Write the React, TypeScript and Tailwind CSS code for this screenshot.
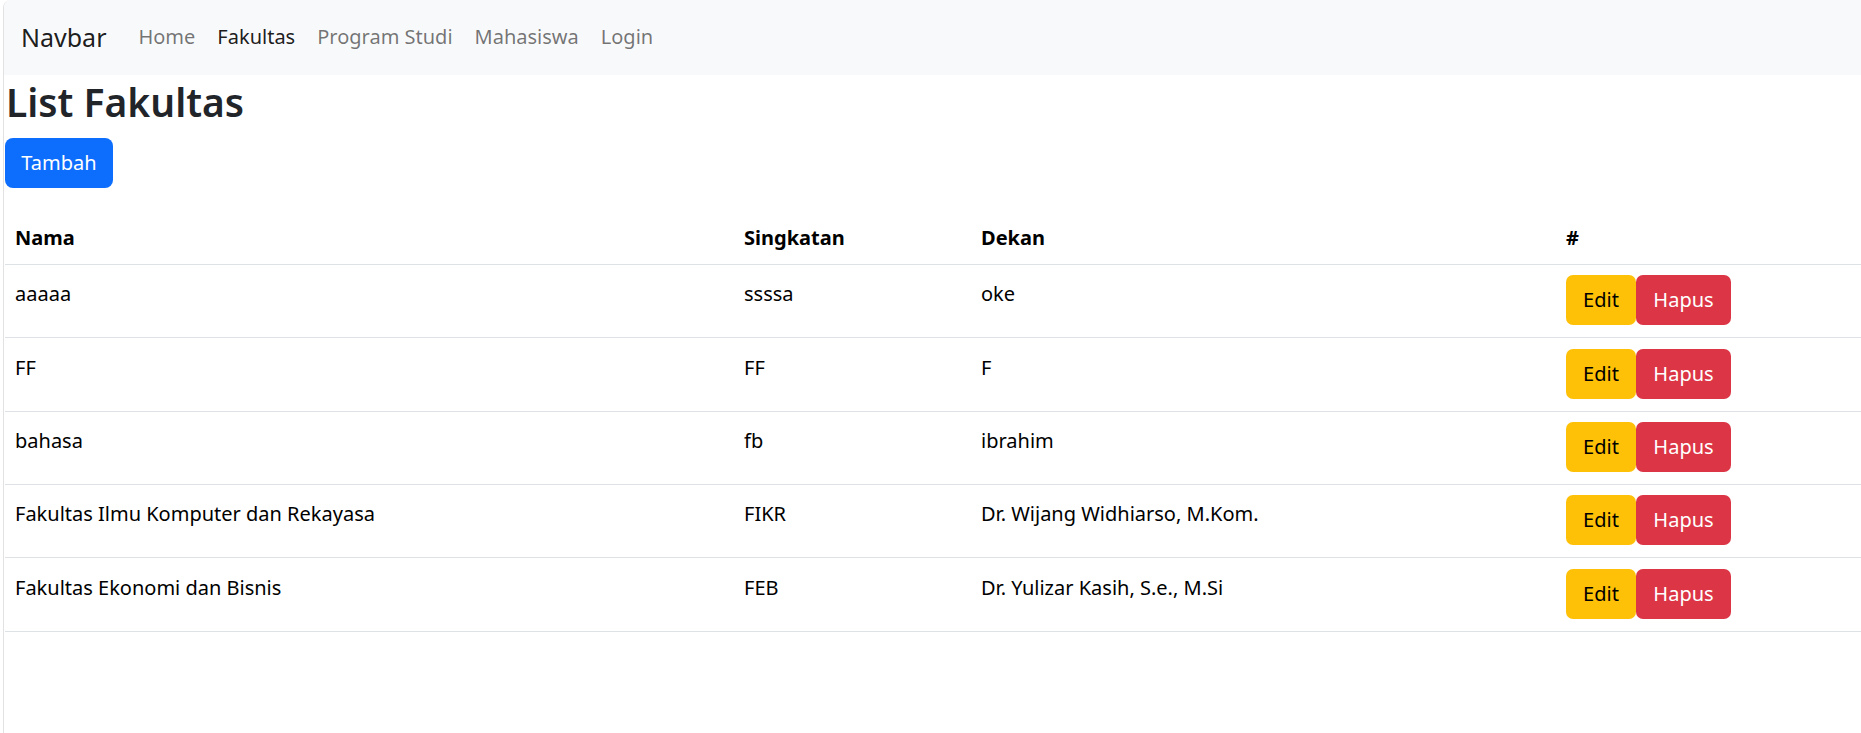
import React from "react";

const rows = [
  { nama: "aaaaa", singkatan: "ssssa", dekan: "oke" },
  { nama: "FF", singkatan: "FF", dekan: "F" },
  { nama: "bahasa", singkatan: "fb", dekan: "ibrahim" },
  { nama: "Fakultas Ilmu Komputer dan Rekayasa", singkatan: "FIKR", dekan: "Dr. Wijang Widhiarso, M.Kom." },
  { nama: "Fakultas Ekonomi dan Bisnis", singkatan: "FEB", dekan: "Dr. Yulizar Kasih, S.e., M.Si" },
];

const cols = "grid grid-cols-[729px_237px_585px_1fr]";

export default function App() {
  return (
    <div
      className="min-h-screen w-full bg-white pl-[3px]"
      style={{ fontFamily: '"Noto Sans", "Open Sans", sans-serif' }}
    >
      <div className="min-h-[733px] border-l border-[#e2e2e2] rounded-tl-[8px] overflow-hidden">
        {/* Navbar */}
        <nav className="h-[74.67px] bg-[#f8f9fa] flex items-center px-[16px]">
          <span className="text-[25px] leading-[30px] text-[rgba(0,0,0,0.9)] mr-[21px] ml-[1px]">Navbar</span>
          <div className="flex items-center text-[20px] leading-[30px]">
            <span className="px-[11px] text-[rgba(0,0,0,0.55)]">Home</span>
            <span className="px-[11px] text-[rgba(0,0,0,0.9)]">Fakultas</span>
            <span className="px-[11px] text-[rgba(0,0,0,0.55)]">Program Studi</span>
            <span className="px-[11px] text-[rgba(0,0,0,0.55)]">Mahasiswa</span>
            <span className="px-[11px] text-[rgba(0,0,0,0.55)]">Login</span>
          </div>
        </nav>

        {/* Content */}
        <div className="pl-[1px]">
          <h1 className="mt-[2px] mb-[11px] text-[39px] leading-[50px] font-semibold text-[#212529] pl-[1px]">
            List Fakultas
          </h1>
          <button className="w-[108px] h-[50px] rounded-[8px] bg-[#0d6efd] text-white text-[20px] leading-[30px] flex items-center justify-center">
            Tambah
          </button>

          <div className="mt-[25px] text-[20px] leading-[30px] text-[#212529]">
            <div className={`${cols} h-[52.33px] border-b border-[#dee2e6] font-bold text-black items-center`}>
              <div className="pl-[10px]">Nama</div>
              <div className="pl-[10px]">Singkatan</div>
              <div className="pl-[10px]">Dekan</div>
              <div className="pl-[10px]">#</div>
            </div>
            {rows.map((r, i) => (
              <div key={i} className={`${cols} h-[73.33px] border-b border-[#dee2e6] text-black`}>
                <div className="pl-[10px] pt-[14.5px]">{r.nama}</div>
                <div className="pl-[10px] pt-[14.5px]">{r.singkatan}</div>
                <div className="pl-[10px] pt-[14.5px]">{r.dekan}</div>
                <div className="pl-[10px] pt-[10.5px] flex items-start">
                  <button className="w-[70px] h-[50px] rounded-[7px] bg-[#ffc107] text-black text-[20px] flex items-center justify-center">
                    Edit
                  </button>
                  <button className="w-[95px] h-[50px] rounded-[7px] bg-[#dc3545] text-white text-[20px] flex items-center justify-center">
                    Hapus
                  </button>
                </div>
              </div>
            ))}
          </div>
        </div>
      </div>
    </div>
  );
}
